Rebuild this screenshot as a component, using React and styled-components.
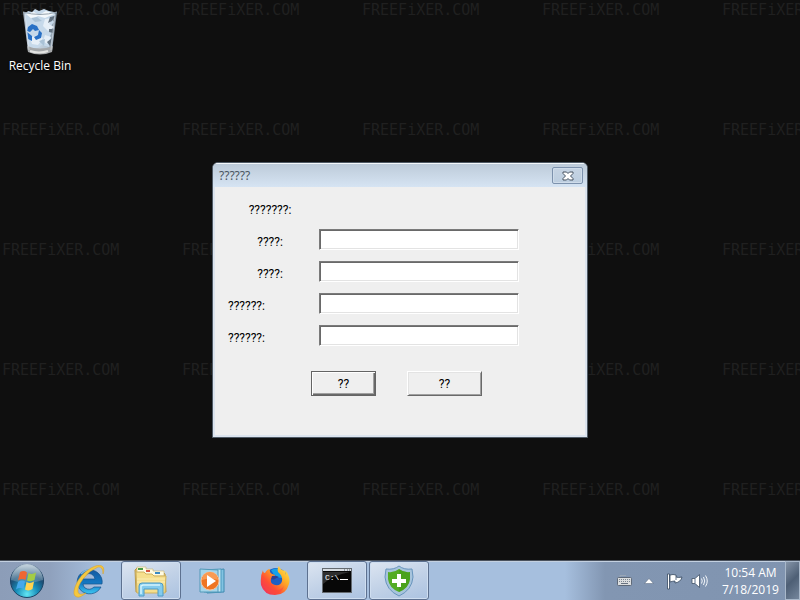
import styled, {createGlobalStyle} from "styled-components";

const GlobalStyle = createGlobalStyle`
  * {
    box-sizing: border-box;
  }
  body {
    margin: 0;
    background-color: #0f0f0f;
    font-family: "Noto Sans", "Open Sans", sans-serif;
    font-size: 12px;
  }
`;
const Desktop = styled.div`
  position: relative;
  display: flex;
  flex-direction: column;
  min-height: 100vh;
  overflow: hidden;
  background-color: #0f0f0f;
`;
const Wallpaper = styled.div`
  position: absolute;
  inset: 0;
  overflow: hidden;
  display: grid;
  grid-template-columns: repeat(5, 180px);
  grid-auto-rows: 120px;
  padding-left: 2px;
  color: #202020;
  font-family: "DejaVu Sans Mono", monospace;
  font-size: 15px;
  line-height: 20px;
`;
const Workspace = styled.main`
  position: relative;
  flex: 1;
  padding: 8px 4px;
`;
const Shortcut = styled.button`
  display: flex;
  flex-direction: column;
  align-items: center;
  gap: 2px;
  width: 72px;
  padding: 0;
  border: 0;
  background: none;
  color: #fff;
  font-family: "Open Sans", "Noto Sans", sans-serif;
  font-size: 12px;
  line-height: 16px;
  text-shadow: 0 1px 2px #000;
  white-space: nowrap;
`;
const WindowLayer = styled.div`
  position: absolute;
  inset: 0;
  display: grid;
  place-items: center;
  pointer-events: none;
`;
const Dialog = styled.section`
  width: 376px;
  border: 1px solid #4f5a65;
  border-radius: 6px 6px 0 0;
  background-color: #dce4ee;
  overflow: hidden;
  pointer-events: auto;
`;
const TitleBar = styled.header`
  display: flex;
  justify-content: space-between;
  align-items: center;
  height: 24px;
  padding: 0 4px 0 6px;
  border-top: 1px solid #f4f8fb;
  background: linear-gradient(#bdcbd9, #d6e4f3);
`;
const Title = styled.h1`
  margin: 0;
  color: #4b5560;
  font-size: 12px;
  font-weight: normal;
  line-height: 16px;
`;
const CloseButton = styled.button`
  display: flex;
  align-items: center;
  justify-content: center;
  width: 31px;
  height: 17px;
  padding: 0;
  border: 1px solid #7d92ad;
  border-radius: 2px;
  background: linear-gradient(#c6d4e3, #bccddf);
  box-shadow: inset 0 0 0 1px #cfdcea;
`;
const Form = styled.form`
  display: flex;
  flex-direction: column;
  gap: 11px;
  margin: 0 2px 2px;
  padding: 10px 12px 39px 13px;
  background-color: #efefef;
  font-family: Roboto, sans-serif;
  font-size: 12px;
  color: #000;
`;
const Row = styled.div`
  display: flex;
  gap: 7px;
  height: 21px;
`;
const Label = styled.label`
  width: 84px;
  padding-top: 5px;
  line-height: 16px;
  text-align: ${props => props.$align};
`;
const TextBox = styled.input`
  width: 200px;
  height: 21px;
  padding: 1px 3px;
  border: 1px solid;
  border-color: #7a7a7a #fff #fff #7a7a7a;
  border-radius: 0;
  background-color: #fff;
  box-shadow: inset 1px 1px #696969, inset -1px -1px #e3e3e3;
  font: inherit;
  outline: 0;
`;
const Actions = styled.div`
  display: flex;
  gap: 31px;
  padding: 14px 0 0 83px;
`;
const PushButton = styled.button`
  width: ${props => props.$primary ? 65 : 75}px;
  height: 25px;
  padding: 0;
  border: 1px solid;
  border-color: ${props => props.$primary ? "#646464" : "#fff #696969 #696969 #fff"};
  border-radius: 0;
  background-color: #efefef;
  box-shadow: ${props => props.$primary
    ? "inset 1px 1px #fff, inset -1px -1px #696969, inset -2px -2px #a0a0a0"
    : "inset 1px 1px #e3e3e3, inset -1px -1px #a0a0a0"};
  font: inherit;
  color: #000;
`;
const Taskbar = styled.footer`
  position: relative;
  display: flex;
  gap: 2px;
  height: 40px;
  border-top: 1px solid #49515d;
  background: linear-gradient(90deg, #8c9db8 0, #8fa1bd 50px, #a6bfde 100px, #a6bfde calc(100% - 235px), #8296b2 calc(100% - 195px), #8094b0 100%);
  box-shadow: inset 0 1px #c3d0e0;
`;
const StartButton = styled.button`
  width: 57px;
  padding: 1px 3px 0 0;
  border: 0;
  background: none;
  line-height: 0;
`;
const TaskButton = styled.button`
  width: 60px;
  padding: 0;
  border: 1px solid ${props => props.$open ? "#5d7190" : "transparent"};
  border-radius: 3px;
  background: ${props => props.$open ? "linear-gradient(160deg, #dce5f1, #c2d2e7 50%, #abc2e0)" : "none"};
  box-shadow: ${props => props.$open ? "inset 0 0 0 1px #cfdef0" : "none"};
  line-height: 0;
`;
const Tray = styled.div`
  display: flex;
  align-items: center;
  gap: 8px;
  margin-left: auto;
`;
const TrayButton = styled.button`
  display: flex;
  padding: 0 ${props => props.$narrow ? 4 : 0}px;
  border: 0;
  background: none;
`;
const Clock = styled.time`
  display: flex;
  flex-direction: column;
  width: 69px;
  text-align: center;
  color: #fff;
  font-family: "Open Sans", "Noto Sans", sans-serif;
  font-size: 12px;
  line-height: 17px;
  white-space: nowrap;
`;
const ShowDesktop = styled.button`
  width: 15px;
  height: 39px;
  margin-left: -8px;
  padding: 0;
  border: 1px solid #a9b8ca;
  background: linear-gradient(135deg, #8594a8, #4e5f75 50%, #75869c);
`;

const RecycleBinIcon = () => (
  <svg width="38" height="48" viewBox="0 0 38 48">
    <defs>
      <linearGradient id="bin" x1="0" x2="1">
        <stop offset="0" stopColor="#9eabb9" />
        <stop offset=".25" stopColor="#d5dfe9" />
        <stop offset=".7" stopColor="#b3c4d3" />
        <stop offset="1" stopColor="#768492" />
      </linearGradient>
    </defs>
    <path d="M2 4 L36 4 L31 43 Q19 48 7 43Z" fill="url(#bin)" />
    <path d="M4 6 L7 3 L11 4 L14 1 L18 3 L23 1 L28 3 L33 4 L34 7 L30 10 L33 14 L30 18 L32 22 L29 28 L31 32 L28 39 L21 37 L15 41 L8 38 L6 27Z" fill="#c6d9ea" />
    <path d="M5 6 L13 4 L18 7 L25 3 L33 6 L24 10 L17 8 L11 11Z" fill="#f4f8fb" />
    <path d="M24 11 L32 10 L28 16 L33 19 L27 23 L22 18Z M9 30 L16 27 L22 30 L17 37 L11 36Z M24 27 L30 29 L26 36 L22 33Z" fill="#e6eff7" />
    <path d="M10 10 L16 9 L21 13 L14 14Z M18 33 L24 31 L23 38Z" fill="#aac2d6" />
    <path d="M29 9 L34 8 L31 13 L27 15Z M28 21 L33 21 L32 25 L28 24Z M26 34 L31 30 L29 38Z" fill="#62717f" />
    <path d="M7 19 L11 16 L16 18 L18 22 L14 23 L12 21 L9 24 L6 23Z M18 22 L21 25 L20 30 L15 32 L13 29 L17 27Z M6 24 L11 28 L11 33 L7 31Z" fill="#2870c5" />
    <path d="M6 38 Q19 43 32 38 L31 44 Q19 49 7 44Z" fill="#a4a7a9" />
    <path d="M9 43 Q18 46 27 43" fill="none" stroke="#e4e4e2" strokeWidth="2" />
    <path d="M2 4 Q19 9 36 4" fill="none" stroke="#98a4ae" />
    <path d="M4 6 L8 42 M34 6 L30 42" stroke="#eff5fa" opacity=".5" />
  </svg>
);
const CloseIcon = () => (
  <svg width="12" height="10" viewBox="0 0 12 10">
    <path d="M1 1 H4.500 L6 2.500 L7.500 1 H11 V2.500 L8.500 5 L11 7.500 V9 H7.500 L6 7.500 L4.500 9 H1 V7.500 L3.500 5 L1 2.500Z" fill="#fff" stroke="#45505f" />
  </svg>
);
const StartIcon = () => (
  <svg width="36" height="36" viewBox="0 0 36 36">
    <defs>
      <radialGradient id="orb" cx=".5" cy=".9" r=".85">
        <stop offset="0" stopColor="#62e6f4" />
        <stop offset=".4" stopColor="#168bb7" />
        <stop offset=".7" stopColor="#1c4f76" />
        <stop offset="1" stopColor="#58758f" />
      </radialGradient>
      <linearGradient id="shine" x2="0" y2="1">
        <stop offset="0" stopColor="#dce8f0" stopOpacity=".85" />
        <stop offset="1" stopColor="#a4bdcc" stopOpacity=".25" />
      </linearGradient>
    </defs>
    <circle cx="18" cy="18" r="16.500" fill="url(#orb)" stroke="#1d4365" />
    <path d="M2 17 A16 16 0 0 1 34 17 Q18 23 2 17Z" fill="url(#shine)" />
    <path d="M11 9 Q15 7 18 9.500 L16.500 17 Q13 15 9 17.500Z" fill="#ef6732" />
    <path d="M19.500 10 Q23 12 27 9.500 L25.500 17 Q22 19 18 17.500Z" fill="#a3cc45" />
    <path d="M9 19 Q13 16.500 16 18.500 L14.500 26 Q11 24 7 26.500Z" fill="#45a8ea" />
    <path d="M17.500 19 Q21 21 25 18.500 L23.500 26 Q20 28.500 16 26.500Z" fill="#ffd34e" />
  </svg>
);
const ExplorerIcon = () => (
  <svg width="34" height="34" viewBox="0 0 34 34">
    <defs>
      <linearGradient id="ie" x2="0" y2="1">
        <stop offset="0" stopColor="#1459a0" />
        <stop offset=".55" stopColor="#1478c2" />
        <stop offset="1" stopColor="#3cc7f2" />
      </linearGradient>
    </defs>
    <path d="M30 20 A12.500 12 0 1 0 29 23 L22 23 Q18 27 13 24 Q11 22 11 20Z M11 15 Q12 10 17 9.500 Q22 10 23 15Z" fill="url(#ie)" fillRule="evenodd" stroke="#14528d" strokeWidth=".7" />
    <path d="M9 10 Q14 5 20 6" fill="none" stroke="#79b6df" strokeWidth="1.500" />
    <path d="M31 10 Q33 4 30 2 Q26 0 19 4 Q7 11 3 23 Q0 32 5 33 Q8 34 14 29 Q7 32 6 28 Q5 23 11 15 Q18 6 26 3 Q31 2 31 10Z" fill="#f5c83f" stroke="#d99e25" strokeWidth=".5" />
  </svg>
);
const FolderIcon = () => (
  <svg width="34" height="32" viewBox="0 0 34 32">
    <path d="M2 27 L1 5 L3 3 L11 3 L13 5 L18 5 L20 7 L29 7 L31 9 L32 27Z" fill="#e6c567" stroke="#b8984b" />
    <path d="M3 2 H12 V4 H19 V6 H30 V11 H3Z" fill="#fffbe3" stroke="#c6b371" strokeWidth=".6" />
    <rect x="4" y="3" width="5" height="2" fill="#4c9b45" />
    <rect x="12" y="5" width="4" height="2" fill="#d7533b" />
    <rect x="21" y="7" width="5" height="2" fill="#3b8ac2" />
    <path d="M2 7 H10 L12 9 H18 L20 11 H32 L31 28 L3 28Z" fill="#f6df8d" stroke="#cfb25e" />
    <path d="M3 14 H31 M3 17 H31" stroke="#fbeeb5" />
    <path d="M5 31 V21 Q5 18 8 18 H26 Q29 18 29 21 V31 H24 V24 H10 V31Z" fill="#83cbed" stroke="#4c9ac4" />
    <path d="M7 29 V21 L9 20 H26" fill="none" stroke="#d4f3fd" strokeWidth="1.500" />
  </svg>
);
const MediaIcon = () => (
  <svg width="28" height="26" viewBox="0 0 28 26">
    <path d="M7 3 L25 1 V24 L8 25Z" fill="#82c3e2" stroke="#3e8ab0" />
    <path d="M4 2 L22 1 V24 L5 24Z" fill="#c2e6f3" stroke="#4d9abe" />
    <path d="M1 1 L19 2 V24 L1 24Z" fill="#a4d5ea" stroke="#5299b8" />
    <circle cx="11" cy="13" r="9" fill="#ee7522" stroke="#f6c39c" />
    <path d="M3 12 A8 8 0 0 1 19 12 Q11 9 3 12Z" fill="#f99b52" />
    <path d="M8 7 L17 13 L8 19Z" fill="#fff" />
  </svg>
);
const FirefoxIcon = () => (
  <svg width="30" height="30" viewBox="0 0 30 30">
    <defs>
      <linearGradient id="fox" x1="1" y1="0" x2="0" y2="1">
        <stop offset="0" stopColor="#fff15b" />
        <stop offset=".35" stopColor="#ffac24" />
        <stop offset=".65" stopColor="#ff5034" />
        <stop offset="1" stopColor="#e82772" />
      </linearGradient>
    </defs>
    <circle cx="16" cy="14" r="12" fill="#1f5fc4" />
    <path d="M11 4 Q18 0 23 6 L22 12 Q15 12 11 4Z" fill="#15a0ea" />
    <path d="M3 4 Q3 7 5 7 Q7 3 10 3 Q9 6 12 8 L15 9 Q15 12 11 13 Q10 18 15 19 Q21 20 22 15 Q23 10 18 6 Q17 2 19 0 Q20 4 25 5 L26 9 Q26 6 25 4 Q31 11 29 18 Q26 29 15 29 Q4 29 1 19 Q0 10 3 4Z" fill="url(#fox)" />
    <path d="M12 10 Q15 9 19 11 Q16 12 15 13 Q13 14 11 13Z" fill="#303f91" />
    <path d="M2 15 Q6 23 14 24 Q21 25 24 20 Q21 29 13 28 Q4 27 2 15Z" fill="#fa473f" opacity=".6" />
  </svg>
);
const ConsoleIcon = () => (
  <svg width="30" height="25" viewBox="0 0 30 25">
    <rect x=".5" y=".5" width="29" height="24" fill="#070707" stroke="#646a70" />
    <path d="M1 1 H29 V3 H1Z" fill="#d7dce1" />
    <path d="M22 2 H23 M25 2 H26 M27 2 H28" stroke="#4f5963" />
    <path d="M1 4 H28 Q11 7 1 16Z" fill="#444" opacity=".65" />
    <text x="3" y="12" fill="#fff" fontFamily="Liberation Mono, monospace" fontSize="8">C:\</text>
    <path d="M18 11.500 H26" stroke="#fff" />
  </svg>
);
const ShieldIcon = () => (
  <svg width="30" height="32" viewBox="0 0 30 32">
    <path d="M15 1 Q20 5 28 4 L29 12 Q28 25 15 31 Q2 25 1 12 L2 4 Q10 5 15 1Z" fill="#a7c4dc" stroke="#6794bd" />
    <path d="M15 4 Q20 8 26 7 V14 Q25 23 15 27 Q5 23 4 14 V7 Q10 8 15 4Z" fill="#54ac24" />
    <path d="M15 4 Q20 8 26 7 V14 Q25 23 15 27Z" fill="#409715" opacity=".5" />
    <path d="M13 9 H17 V14 H22 V18 H17 V22 H13 V18 H8 V14 H13Z" fill="#fff" />
  </svg>
);
const KeyboardIcon = () => (
  <svg width="15" height="12" viewBox="0 0 15 12">
    <path d="M3 2 V.5 H9" fill="none" stroke="#9aa6b5" />
    <rect x=".5" y="2.500" width="14" height="8" rx="1" fill="#dcdedf" stroke="#5e6978" />
    <path d="M2 4.500 H13 M2 6.500 H13" stroke="#7d8692" strokeDasharray="1 1" />
    <path d="M4 8.500 H11" stroke="#687280" />
  </svg>
);
const ArrowIcon = () => (
  <svg width="10" height="6" viewBox="0 0 10 6">
    <path d="M.5 5.500 L5 .5 L9.500 5.500Z" fill="#fff" stroke="#56677d" strokeWidth=".5" />
  </svg>
);
const FlagIcon = () => (
  <svg width="17" height="18" viewBox="0 0 17 18">
    <path d="M1.500 2 H3.500 V17 H1.500Z" fill="#fff" stroke="#35475e" strokeWidth=".8" />
    <path d="M4 3 Q7 2 10 3 V5 Q12 6 16 5 Q15 10 9 11 V9 Q7 9 4 10Z" fill="#fff" stroke="#35475e" strokeWidth=".8" />
    <path d="M10 5 V8" stroke="#64748a" />
  </svg>
);
const SpeakerIcon = () => (
  <svg width="17" height="16" viewBox="0 0 17 16">
    <path d="M1 5.500 H4 L8.500 1.500 V14.500 L4 10.500 H1Z" fill="#fff" stroke="#3f5066" strokeWidth=".8" />
    <path d="M4 6 V10" stroke="#60738b" />
    <path d="M10.500 5.500 Q12 8 10.500 10.500 M12.500 4 Q15 8 12.500 12 M14.500 2.500 Q18 8 14.500 13.500" fill="none" stroke="#f4f7fb" />
  </svg>
);

const fields = [
  {id: "first", label: "????:", align: "center"},
  {id: "second", label: "????:", align: "center"},
  {id: "third", label: "??????:", align: "left"},
  {id: "fourth", label: "??????:", align: "left"},
];
const tasks = [
  {name: "Internet Explorer", icon: <ExplorerIcon />},
  {name: "Windows Explorer", icon: <FolderIcon />, open: true},
  {name: "Media Player", icon: <MediaIcon />},
  {name: "Firefox", icon: <FirefoxIcon />},
  {name: "Command Prompt", icon: <ConsoleIcon />, open: true},
  {name: "Security", icon: <ShieldIcon />, open: true},
];

export default function App() {
  return (
    <Desktop>
      <GlobalStyle />
      <Wallpaper aria-hidden="true">
        {Array.from({length: 25}, (_, i) => <span key={i}>FREEFiXER.COM</span>)}
      </Wallpaper>
      <Workspace>
        <Shortcut>
          <RecycleBinIcon />
          Recycle Bin
        </Shortcut>
      </Workspace>
      <WindowLayer>
        <Dialog role="dialog" aria-labelledby="title">
          <TitleBar>
            <Title id="title">??????</Title>
            <CloseButton aria-label="Close"><CloseIcon /></CloseButton>
          </TitleBar>
          <Form onSubmit={ev => ev.preventDefault()}>
            <Row>
              <Label as="span" $align="center">???????:</Label>
            </Row>
            {fields.map(field => (
              <Row key={field.id}>
                <Label htmlFor={field.id} $align={field.align}>{field.label}</Label>
                <TextBox id={field.id} type="text" />
              </Row>
            ))}
            <Actions>
              <PushButton $primary type="submit">??</PushButton>
              <PushButton type="button">??</PushButton>
            </Actions>
          </Form>
        </Dialog>
      </WindowLayer>
      <Taskbar>
        <StartButton aria-label="Start"><StartIcon /></StartButton>
        {tasks.map(task => (
          <TaskButton key={task.name} $open={task.open} aria-label={task.name}>{task.icon}</TaskButton>
        ))}
        <Tray>
          <TrayButton aria-label="Keyboard"><KeyboardIcon /></TrayButton>
          <TrayButton $narrow aria-label="Show hidden icons"><ArrowIcon /></TrayButton>
          <TrayButton aria-label="Action Center"><FlagIcon /></TrayButton>
          <TrayButton aria-label="Volume"><SpeakerIcon /></TrayButton>
          <Clock>
            <span>10:54 AM</span>
            <span>7/18/2019</span>
          </Clock>
          <ShowDesktop aria-label="Show desktop" />
        </Tray>
      </Taskbar>
    </Desktop>
  );
}
